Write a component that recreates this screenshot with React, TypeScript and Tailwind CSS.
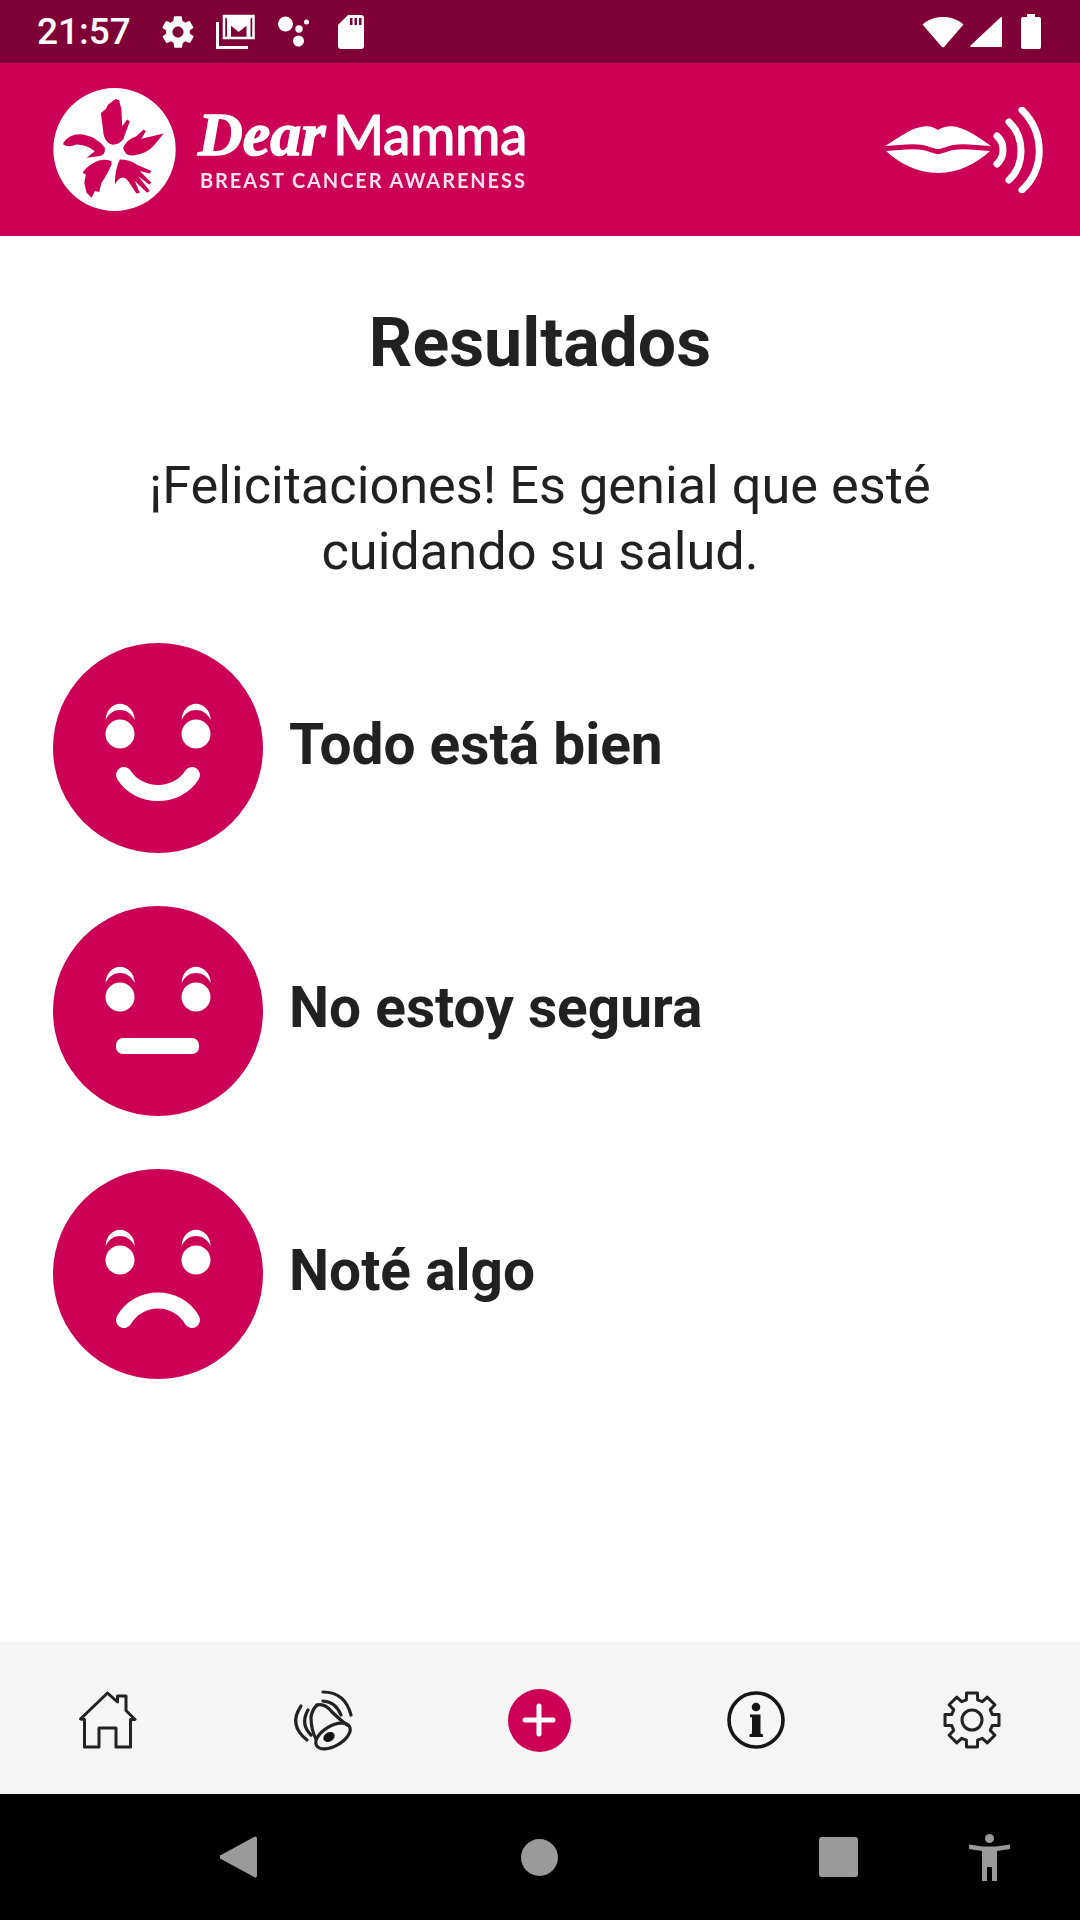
const cogPath = () => {
  // 8 tooth cog outline, centre 29,29
  const pts: string[] = [];
  for (let i = 0; i < 8; i++) {
    const a = (i * Math.PI) / 4 - Math.PI / 2;
    const d = 0.2;
    const p = (r: number, o: number) => `${(29 + r * Math.cos(a + o)).toFixed(1)} ${(29 + r * Math.sin(a + o)).toFixed(1)}`;
    pts.push(`${i === 0 ? 'M' : 'L'}${p(21, -d - 0.07)}`, `L${p(27.5, -d)}`, `L${p(27.5, d)}`, `L${p(21, d + 0.07)}`);
  }
  return pts.join(' ') + ' Z';
};

const Brows = () => (
  <>
    <path d="M52.7 77C52.7 67 60 60.7 67 60.7S81.7 67 81.7 77C78 70 73 67 67 67S56 70 52.7 77Z" fill="white" />
    <path d="M128.7 77C128.7 67 136 60.7 143 60.7S157.7 67 157.7 77C154 70 149 67 143 67S132 70 128.7 77Z" fill="white" />
    <circle cx="67" cy="91" r="14.5" fill="white" />
    <circle cx="143" cy="91" r="14.5" fill="white" />
  </>
);

const Face = ({ mouth }: { mouth: 'smile' | 'flat' | 'sad' }) => (
  <svg viewBox="0 0 210 210" className="w-[210px] h-[210px] shrink-0">
    <circle cx="105" cy="105" r="105" fill="#cc0055" />
    <Brows />
    {mouth === 'smile' && <path d="M71 132C86 156 124 156 139 132" fill="none" stroke="white" strokeWidth="16" strokeLinecap="round" />}
    {mouth === 'flat' && <rect x="63" y="132" width="83" height="16" rx="7" fill="white" />}
    {mouth === 'sad' && <path d="M71 151C86 125 124 125 139 151" fill="none" stroke="white" strokeWidth="16" strokeLinecap="round" />}
  </svg>
);

const ResultRow = ({ mouth, label }: { mouth: 'smile' | 'flat' | 'sad'; label: string }) => (
  <div className="flex items-center h-[210px] pl-[53px] gap-[26px]">
    <Face mouth={mouth} />
    <p className="font-bold text-[56.800px] leading-[66px] text-[#212121] -mt-[6px]">{label}</p>
  </div>
);

const StatusBar = () => (
  <div className="h-[63px] bg-[#7f0036] flex items-center pl-[37px] pr-[39px] text-white shrink-0">
    <span className="text-[37px] font-medium leading-none w-[122px]">21:57</span>
    <svg viewBox="0 0 24 24" className="w-[38px] h-[38px]" fill="white">
      <path d="M19.4 13c.1-.3.1-.7.1-1s0-.7-.1-1l2.1-1.6c.2-.2.2-.4.1-.6l-2-3.5c-.1-.2-.4-.3-.6-.2l-2.5 1c-.5-.4-1.1-.7-1.7-1l-.4-2.6c0-.3-.2-.5-.5-.5h-4c-.3 0-.5.2-.5.4l-.4 2.7c-.6.2-1.1.6-1.7 1l-2.5-1c-.2-.1-.5 0-.6.2l-2 3.5c-.1.2-.1.4.1.6L4.6 11c-.1.3-.1.7-.1 1s0 .7.1 1l-2.1 1.6c-.2.2-.2.4-.1.6l2 3.5c.1.2.4.3.6.2l2.5-1c.5.4 1.1.7 1.7 1l.4 2.6c0 .3.2.5.5.5h4c.3 0 .5-.2.5-.4l.4-2.7c.6-.2 1.1-.6 1.7-1l2.5 1c.2.1.5 0 .6-.2l2-3.5c.1-.2.1-.4-.1-.6L19.4 13zM12 15.500c-1.900 0-3.500-1.600-3.500-3.500s1.600-3.500 3.500-3.500 3.500 1.600 3.500 3.500-1.600 3.500-3.500 3.500z" />
    </svg>
    <svg viewBox="0 0 40 36" className="w-[40px] h-[36px] ml-[18px]" fill="none" stroke="white">
      <path d="M2.500 8V33.500H33" strokeWidth="3" />
      <rect x="9" y="2" width="29.500" height="22" strokeWidth="2.500" />
      <path d="M14 23V7.500L23.700 15.500L33.500 7.500V23" strokeWidth="4" />
      <path d="M9 2H38.500L23.700 13Z" fill="white" strokeWidth="1" />
    </svg>
    <svg viewBox="0 0 32 32" className="w-[32px] h-[32px] ml-[22px]" fill="white">
      <circle cx="8.500" cy="8" r="7.500" />
      <circle cx="21.500" cy="25" r="5.500" />
      <circle cx="22" cy="13" r="3.700" />
      <circle cx="29.500" cy="6" r="2.500" />
    </svg>
    <svg viewBox="0 0 26 34" className="w-[26px] h-[34px] ml-[29px]">
      <path d="M10 0H23a3 3 0 0 1 3 3V31a3 3 0 0 1-3 3H3a3 3 0 0 1-3-3V10Z" fill="white" />
      <path d="M12 3h2.500v7H12ZM16.500 3H19v7h-2.500ZM21 3h2.500v7H21Z" fill="#7f0036" />
    </svg>
    <div className="flex-1" />
    <svg viewBox="0 0 42 32" className="w-[42px] h-[32px]" fill="white">
      <path d="M0.500 8.500C6 3.500 13 1 21 1S36 3.500 41.500 8.500L22.500 30.500a2 2 0 0 1-3 0Z" />
    </svg>
    <svg viewBox="0 0 32 32" className="w-[32px] h-[32px] ml-[6px]" fill="white">
      <path d="M31 1a1 1 0 0 1 1 1V30a1 1 0 0 1-1 1H1a1 1 0 0 1-.5-1.500Z" />
    </svg>
    <svg viewBox="0 0 20 35" className="w-[20px] h-[35px] ml-[19px]" fill="white">
      <path d="M6 0H14V3H18a2 2 0 0 1 2 2V33a2 2 0 0 1-2 2H2a2 2 0 0 1-2-2V5a2 2 0 0 1 2-2H6Z" />
    </svg>
  </div>
);

const Logo = () => (
  <svg viewBox="40 35 368 370" className="w-[123px] h-[123px] shrink-0 blur-[0.5px]">
    <ellipse cx="224" cy="220" rx="184" ry="185" fill="white" />
    <g fill="#cc0055">
      <path d="M190 165L183 110L198 98L205 85L222 72L228 68L238 72L245 100L247 150L262 130L270 135L250 190Q225 215 205 200Q190 185 190 165Z" />
      <path d="M250 215Q260 190 290 180L312 160L318 165L305 188L372 172L345 205Q320 235 280 238Q255 240 250 215Z" />
      <path d="M70 200Q90 170 130 175Q175 185 195 215Q198 240 175 240L140 245L165 225Q140 205 110 205Q85 215 70 205Z" />
      <path d="M215 255Q190 245 165 258Q140 270 128 290L138 295L133 320L140 350L155 365L165 345L178 348L185 320Q205 290 215 265Z" />
      <path d="M225 325Q225 280 240 250Q270 250 290 265L335 285L330 292L300 285L335 320L328 325L295 300L330 345L322 350L285 315L300 350L290 352L265 315Q245 290 225 325Z" />
    </g>
  </svg>
);

const Lips = () => (
  <svg viewBox="0 0 158 86" className="w-[158px] h-[86px] blur-[0.4px]" fill="none">
    <path d="M0 39C12 32 24 22 36 20C44 18 50 21 53 23C56 21 64 18 72 20C84 23 96 32 106 39C90 38 78 36 68 38C60 40 56 42 53 42C50 42 46 40 38 38C28 36 14 38 0 39Z" fill="white" />
    <path d="M1 44C14 43 28 41 38 43C46 45 50 47 53 47C56 47 60 45 68 43C78 41 92 43 105 44C92 56 74 66 53 66C32 66 14 56 1 44Z" fill="white" />
    <g stroke="white" strokeLinecap="round" strokeWidth="7">
      <path d="M112 29C120 36 120 50 112 57" />
      <path d="M124 15C140 30 140 58 124 73" />
      <path d="M137 3C160 26 160 62 137 83" />
    </g>
  </svg>
);

const Header = () => (
  <div className="h-[173px] bg-[#cc0055] flex items-center pl-[53px] pr-[37px] shrink-0">
    <Logo />
    <div className="ml-[22px] text-white blur-[0.6px] -mt-[4px]">
      <div className="flex items-baseline h-[62px]">
        <span className="font-['Liberation_Serif',serif] font-bold italic text-[62px] leading-[62px] w-[135px] [-webkit-text-stroke:1.5px_white]">Dear</span>
        <span className="font-['Lato',sans-serif] font-medium text-[55px] leading-[62px] tracking-[-0.5px] [-webkit-text-stroke:0.8px_white]">Mamma</span>
      </div>
      <p className="font-['Lato',sans-serif] font-bold text-[20px] leading-[24px] tracking-[1.9px] ml-[2px] mt-[3px] whitespace-nowrap text-[#ffe0ec]">BREAST CANCER AWARENESS</p>
    </div>
    <div className="flex-1" />
    <Lips />
  </div>
);

const HomeIcon = () => (
  <svg viewBox="0 0 58 58" className="w-[58px] h-[58px]" fill="none" stroke="#222" strokeWidth="3" strokeLinejoin="round">
    <path d="M1.500 28L28.500 2L38.500 11V5H47V19.500L56 28.500H51.500V56H37V37H20V56H5.500V28.500Z" />
  </svg>
);

const BellIcon = () => (
  <svg viewBox="0 0 100 100" className="w-[100px] h-[100px] -m-[21px] -translate-x-[4px]" fill="none" stroke="#222" strokeWidth="3.200" strokeLinecap="round">
    <path d="M47 35Q42 40 41 47Q41 60 46 69" />
    <path d="M47 35Q55 33 62 42Q68 48 77 55" />
    <ellipse cx="63" cy="66" rx="19" ry="10" transform="rotate(-30 63 66)" />
    <ellipse cx="59" cy="67" rx="6" ry="4.500" transform="rotate(-30 59 67)" fill="#111" stroke="none" />
    <path d="M53 22Q75 22 81 45" />
    <path d="M53 31Q66 32 71 45" />
    <path d="M31 36Q18 55 37 70" />
    <path d="M38 40Q30 54 41 65" />
  </svg>
);

const PlusIcon = () => (
  <div className="w-[63px] h-[63px] rounded-full bg-[#cc0055] flex items-center justify-center -translate-x-[1px]">
    <svg viewBox="0 0 34 34" className="w-[34px] h-[34px]" stroke="white" strokeWidth="5" strokeLinecap="round">
      <path d="M17 3V31M3 17H31" />
    </svg>
  </div>
);

const InfoIcon = () => (
  <svg viewBox="0 0 58 58" className="w-[58px] h-[58px]">
    <circle cx="29" cy="29" r="27" fill="none" stroke="#151515" strokeWidth="3.600" />
    <circle cx="29" cy="16" r="4.300" fill="#151515" />
    <path d="M23 23.500H33.500V42.500L36 43.500V46H22.500V43.500L25 42.500V26.500L23 26Z" fill="#151515" />
  </svg>
);

const GearIcon = () => (
  <svg viewBox="0 0 58 58" className="w-[58px] h-[58px]" fill="none" stroke="#222" strokeWidth="3" strokeLinejoin="round">
    <path d={cogPath()} />
    <circle cx="29" cy="29" r="10" />
  </svg>
);

const BottomNav = () => (
  <div className="h-[152px] bg-[#f5f5f5] grid grid-cols-5 shrink-0">
    {[<HomeIcon />, <BellIcon />, <PlusIcon />, <InfoIcon />, <GearIcon />].map((icon, i) => (
      <div key={i} className="flex items-center justify-center mt-[4px]">{icon}</div>
    ))}
  </div>
);

const SystemNav = () => (
  <div className="h-[126px] bg-black flex items-center pl-[220px] shrink-0">
    <svg viewBox="0 0 37 42" className="w-[37px] h-[42px]">
      <path d="M35 0.500a2 2 0 0 1 2 1.500V40a2 2 0 0 1-2 1.500L1 23a2 2 0 0 1 0-4Z" fill="#9a9a9a" />
    </svg>
    <div className="w-[37px] h-[37px] rounded-full bg-[#9a9a9a] ml-[264px]" />
    <div className="w-[39px] h-[40px] rounded-[3px] bg-[#9a9a9a] ml-[261px]" />
    <svg viewBox="0 0 41 47" className="w-[41px] h-[47px] ml-[111px]" fill="#9a9a9a">
      <circle cx="20.500" cy="4.500" r="4.500" />
      <path d="M0 10.500L14 12.500H27L41 10.500V15L28 17V47H23V33H18V47H13V17L0 15Z" />
    </svg>
  </div>
);

export default function App() {
  return (
    <div className="w-[1080px] h-[1920px] flex flex-col bg-white font-['Roboto',sans-serif]">
      <StatusBar />
      <Header />
      <main className="flex-1 flex flex-col pt-[67px]">
        <h1 className="text-center font-bold text-[68px] leading-[80px] text-[#212121]">Resultados</h1>
        <p className="text-center text-[52.300px] leading-[65.500px] text-[#212121] mt-[70px]">
          ¡Felicitaciones! Es genial que esté
          <br />
          cuidando su salud.
        </p>
        <div className="flex flex-col gap-[53px] mt-[59px]">
          <ResultRow mouth="smile" label="Todo está bien" />
          <ResultRow mouth="flat" label="No estoy segura" />
          <ResultRow mouth="sad" label="Noté algo" />
        </div>
      </main>
      <BottomNav />
      <SystemNav />
    </div>
  );
}
